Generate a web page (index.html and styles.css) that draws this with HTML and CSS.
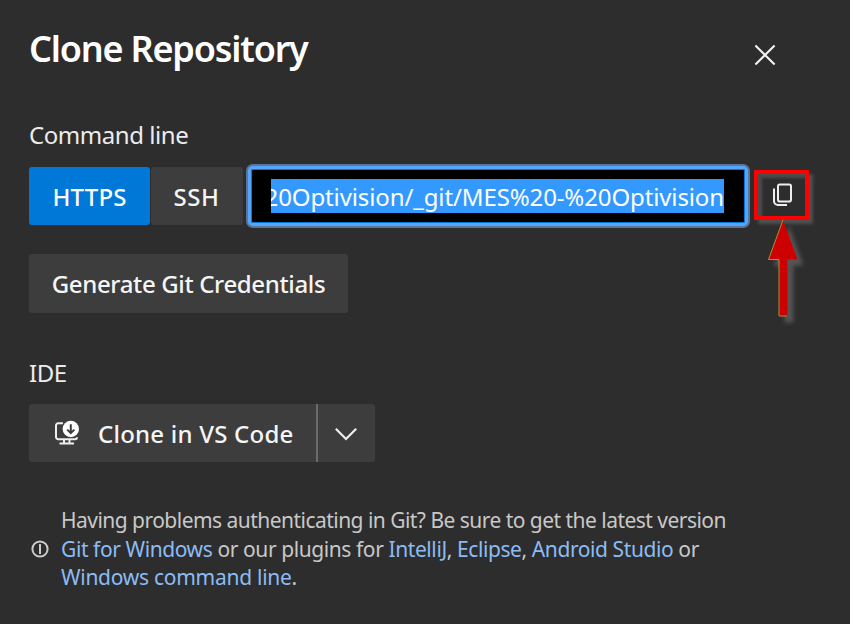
FILE: index.html
```
<!DOCTYPE html>
<html lang="en">
<head>
<meta charset="utf-8">
<title>Clone Repository</title>
<link rel="stylesheet" href="styles.css">
</head>
<body>
<main class="dialog">
  <header class="header">
    <h1 class="title">Clone Repository</h1>
    <button class="close" aria-label="Close">
      <svg width="22" height="22" viewBox="0 0 22 22"><path d="M1.4 1.4 20.6 20.6M20.6 1.4 1.4 20.6"/></svg>
    </button>
  </header>

  <h2 class="label">Command line</h2>
  <div class="row">
    <button class="button https">HTTPS</button>
    <button class="button ssh">SSH</button>
    <div class="url"><div class="url-view"><span class="url-text">20Optivision/_git/MES%20-%20Optivision</span></div></div>
    <button class="copy" aria-label="Copy">
      <svg width="20" height="24" viewBox="0 0 20 24"><rect x="6" y="1.5" width="13" height="17" rx="1.8"/><path d="M2 5.5V18a4 4 0 0 0 4 4H15"/></svg>
      <svg class="arrow" width="48" height="112" viewBox="0 0 48 112"><path d="M20 2 34.5 41.5H24.3V98H16V41.5H5.5Z"/><path class="edge" d="M20 2 5.5 41.5H16V98H24"/></svg>
    </button>
  </div>
  <button class="button generate">Generate Git Credentials</button>

  <h2 class="label ide">IDE</h2>
  <div class="split">
    <button class="button clone">
      <svg class="monitor" width="26" height="26" viewBox="0 0 26 26"><path class="line" d="M9 3.3H4.2a2.2 2.2 0 0 0-2.2 2.2V17a2.2 2.2 0 0 0 2.2 2.2H21a2 2 0 0 0 2-2M10 19.5V23M15.5 19.5V23M5.5 23.6H20"/><circle cx="16.8" cy="9" r="8.2"/><path class="down" d="M16.8 4.2V13M13.2 9.6l3.6 3.6 3.6-3.6"/></svg>
      <span>Clone in VS Code</span>
    </button>
    <button class="button more" aria-label="More options">
      <svg width="24" height="14" viewBox="0 0 24 14"><path d="M1.8 1.8 12 12 22.2 1.8"/></svg>
    </button>
  </div>

  <div class="help">
    <svg class="info" width="18" height="18" viewBox="0 0 18 18"><circle cx="9" cy="9" r="7.6"/><path d="M9 4V14"/></svg>
    <p class="help-text">
      <span class="l1">Having problems authenticating in Git? Be sure to get the latest version</span><br>
      <span class="l2"><a>Git for Windows</a> or our plugins for <a>IntelliJ</a>, <a>Eclipse</a>, <a>Android Studio</a> or</span><br>
      <span class="l3"><a>Windows command line</a>.</span>
    </p>
  </div>
</main>
</body>
</html>
```
FILE: styles.css
```
* { box-sizing: border-box; }
body {
  margin: 0;
  background: #2d2d2d;
  color: #f0f0f0;
  font-family: "Noto Sans", "Open Sans", sans-serif;
}
.dialog { height: 624px; padding: 26px 29px 0; overflow: hidden; }
button { border: 0; padding: 0; margin: 0; font: inherit; color: inherit; background: none; }
svg { display: block; fill: none; }

.header { display: flex; height: 84px; }
.title {
  flex: 1; margin: 0; color: #fff;
  font-size: 36px; line-height: 46px; font-weight: 600; letter-spacing: -1.2px; white-space: nowrap;
}
.close { width: 22px; height: 22px; margin: 18px 45px 0 0; }
.close svg { stroke: #f2f2f2; stroke-width: 2.1; }

.label { margin: 0; height: 57px; font-size: 24px; line-height: 50px; font-weight: 400; letter-spacing: -.45px; color: #ececec; }

.row { display: flex; height: 58px; }
.button {
  height: 58px; border-radius: 3px; background: #3d3d3d;
  font-size: 24px; font-weight: 500; color: #f5f5f5; white-space: nowrap;
}
.https { width: 121px; background: #0078d7; color: #fff; letter-spacing: .2px; }
.ssh { width: 92px; margin-left: 1px; padding-right: 1px; letter-spacing: .6px; }
.url {
  width: 500px; height: 60px; margin: -1px 0 0 5px; padding: 10px 20px 0 20px;
  background: #000; border: 3px solid #55a5ff; border-radius: 5px;
  box-shadow: 0 0 0 2px #587699, inset 0 0 0 1px #0878d8;
}
.url-view { display: flex; justify-content: flex-end; width: 453px; height: 34px; overflow: hidden; background: #3399ff; }
.url-text { font-size: 24px; line-height: 36px; letter-spacing: -.12px; color: #fff; white-space: nowrap; }
.copy {
  position: relative; width: 55px; height: 50px; margin: 3px 0 0 6px;
  display: flex; align-items: center; justify-content: center;
  border: 4px solid #f00;
  box-shadow: 4px 4px 3px #505050, inset 4px 4px 3px #4c4c4c;
}
.copy svg { stroke: #eee; stroke-width: 2; }
.copy .arrow {
  position: absolute; left: 5px; top: 44px;
  fill: #c00; stroke: none; filter: drop-shadow(6px 6px 2px #555);
}
.copy .arrow .edge { fill: none; stroke: #b88c2c; stroke-width: 1; }

.generate { display: block; width: 319px; height: 59px; margin-top: 29px; letter-spacing: -.35px; }
.ide { height: 56px; margin-top: 35px; }
.split { display: flex; }
.clone { display: flex; align-items: center; width: 287px; padding-left: 25px; gap: 18px; border-radius: 3px 0 0 3px; letter-spacing: .22px; }
.monitor .line { stroke: #eee; stroke-width: 2; }
.monitor circle { fill: #fff; }
.monitor .down { stroke: #3d3d3d; stroke-width: 2; }
.more { display: flex; align-items: center; justify-content: center; width: 59px; border-left: 2px solid #6b6b6b; border-radius: 0 3px 3px 0; }
.more svg { position: relative; left: -1px; top: 1px; stroke: #eee; stroke-width: 2.2; }

.help { display: flex; align-items: center; margin-top: 44px; margin-left: 2px; }
.info { stroke: #ccc; stroke-width: 2; }
.help-text { margin: 0 0 0 12px; font-size: 21px; line-height: 28.5px; color: #c8c8c8; white-space: nowrap; }
.help-text a { color: #8bbcf5; }
.l1 { letter-spacing: -.53px; }
.l2 { letter-spacing: -.41px; }
.l3 { letter-spacing: -.27px; }
```
